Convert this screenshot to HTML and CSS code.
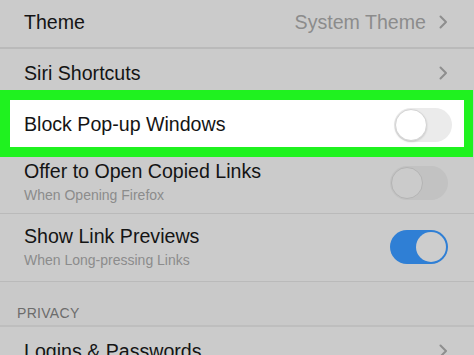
FILE: index.html
```html
<!DOCTYPE html>
<html lang="en">
<head>
    <meta charset="UTF-8">
    <meta name="viewport" content="width=device-width, initial-scale=1.0">
    <title>Settings</title>
    <link rel="stylesheet" href="styles.css">
</head>
<body>
    <div class="settings">
        <div class="row row-theme">
            <span class="title">Theme</span>
            <span class="value">System Theme</span>
            <svg class="chevron" width="9" height="14" viewBox="0 0 9 14"><path d="M1.5 1.5 L7 7 L1.5 12.5" /></svg>
        </div>

        <div class="row row-siri">
            <span class="title">Siri Shortcuts</span>
            <svg class="chevron" width="9" height="14" viewBox="0 0 9 14"><path d="M1.5 1.5 L7 7 L1.5 12.5" /></svg>
        </div>

        <div class="row row-highlight">
            <span class="title">Block Pop-up Windows</span>
            <div class="toggle toggle-white"><span class="knob"></span></div>
        </div>

        <div class="row row-double row-offer">
            <div class="labels">
                <span class="title">Offer to Open Copied Links</span>
                <span class="subtitle">When Opening Firefox</span>
            </div>
            <div class="toggle toggle-off"><span class="knob"></span></div>
        </div>

        <div class="row row-double row-preview">
            <div class="labels">
                <span class="title">Show Link Previews</span>
                <span class="subtitle">When Long-pressing Links</span>
            </div>
            <div class="toggle toggle-on"><span class="knob"></span></div>
        </div>

        <div class="section-header">PRIVACY</div>

        <div class="row row-logins">
            <span class="title">Logins &amp; Passwords</span>
            <svg class="chevron" width="9" height="14" viewBox="0 0 9 14"><path d="M1.5 1.5 L7 7 L1.5 12.5" /></svg>
        </div>
    </div>
</body>
</html>
```

FILE: styles.css
```css
:root {
  --bg-color: #cbcbcb;
  --text-color: #141414;
  --muted-color: #8c8c8c;
  --line-color: #bababa;
  --green: #1ff21f;
  --blue: #2f7fd5;
}

html, body {
  margin: 0;
  padding: 0;
  height: 100%;
  overflow: hidden;
}

body {
  font-family: 'Liberation Sans', Arial, sans-serif;
  background-color: var(--bg-color);
  color: var(--text-color);
}

.settings {
  width: 474px;
}

.row {
  display: flex;
  align-items: center;
  padding: 0 26px 0 24px;
  box-sizing: border-box;
}

.title {
  font-size: 19.6px;
  line-height: 24px;
  flex: 1;
  white-space: nowrap;
}

.value {
  font-size: 19.6px;
  line-height: 24px;
  color: var(--muted-color);
  margin-right: 13px;
}

.chevron path {
  fill: none;
  stroke: #8e8e8e;
  stroke-width: 2;
  stroke-linecap: round;
  stroke-linejoin: round;
}

.row-theme {
  height: 49px;
  padding-bottom: 3px;
  border-bottom: 2px solid var(--line-color);
}

.row-siri {
  height: 41px;
  align-items: flex-start;
  padding-top: 12px;
}

.row-siri .chevron {
  margin-top: 5px;
}

.row-highlight {
  height: 67px;
  background-color: #fff;
  border: 10px solid var(--green);
  border-right-width: 9px;
  width: 473px;
  padding-left: 14px;
  padding-right: 12px;
}

.row-double {
  align-items: center;
}

.labels {
  flex: 1;
  display: flex;
  flex-direction: column;
}

.subtitle {
  font-size: 14px;
  line-height: 18px;
  color: var(--muted-color);
  margin-top: 3px;
}

.row-offer {
  height: 57px;
  align-items: flex-start;
  padding-top: 2px;
  border-bottom: 1px solid var(--line-color);
}

.row-offer .toggle {
  margin-top: 7px;
}

.row-preview {
  height: 68px;
  padding-bottom: 2px;
  border-bottom: 1px solid var(--line-color);
}

.toggle {
  width: 58px;
  height: 34px;
  border-radius: 17px;
  box-sizing: border-box;
  display: flex;
  align-items: center;
  padding: 1px;
}

.knob {
  width: 32px;
  height: 32px;
  border-radius: 50%;
  box-sizing: border-box;
}

.toggle-white {
  background-color: #ebebeb;
  margin-top: 2px;
}

.toggle-white .knob {
  background-color: #fff;
  border: 1px solid #d4d4d4;
  box-shadow: 0 1px 2px rgba(0, 0, 0, 0.15);
}

.toggle-off {
  background-color: #c2c2c2;
}

.toggle-off .knob {
  background-color: #cbcbcb;
  border: 1px solid #b4b4b4;
}

.toggle-on {
  background-color: var(--blue);
  justify-content: flex-end;
  padding: 2px;
}

.toggle-on .knob {
  width: 30px;
  height: 30px;
  background-color: #cdcdcd;
}

.section-header {
  height: 45px;
  box-sizing: border-box;
  padding: 23px 0 0 17px;
  font-size: 14px;
  line-height: 16px;
  letter-spacing: 0.3px;
  color: #6c6c6c;
  background-color: #c9c9c9;
  border-bottom: 2px solid #bebebe;
}

.row-logins {
  height: 48px;
  padding-top: 0;
}
```
